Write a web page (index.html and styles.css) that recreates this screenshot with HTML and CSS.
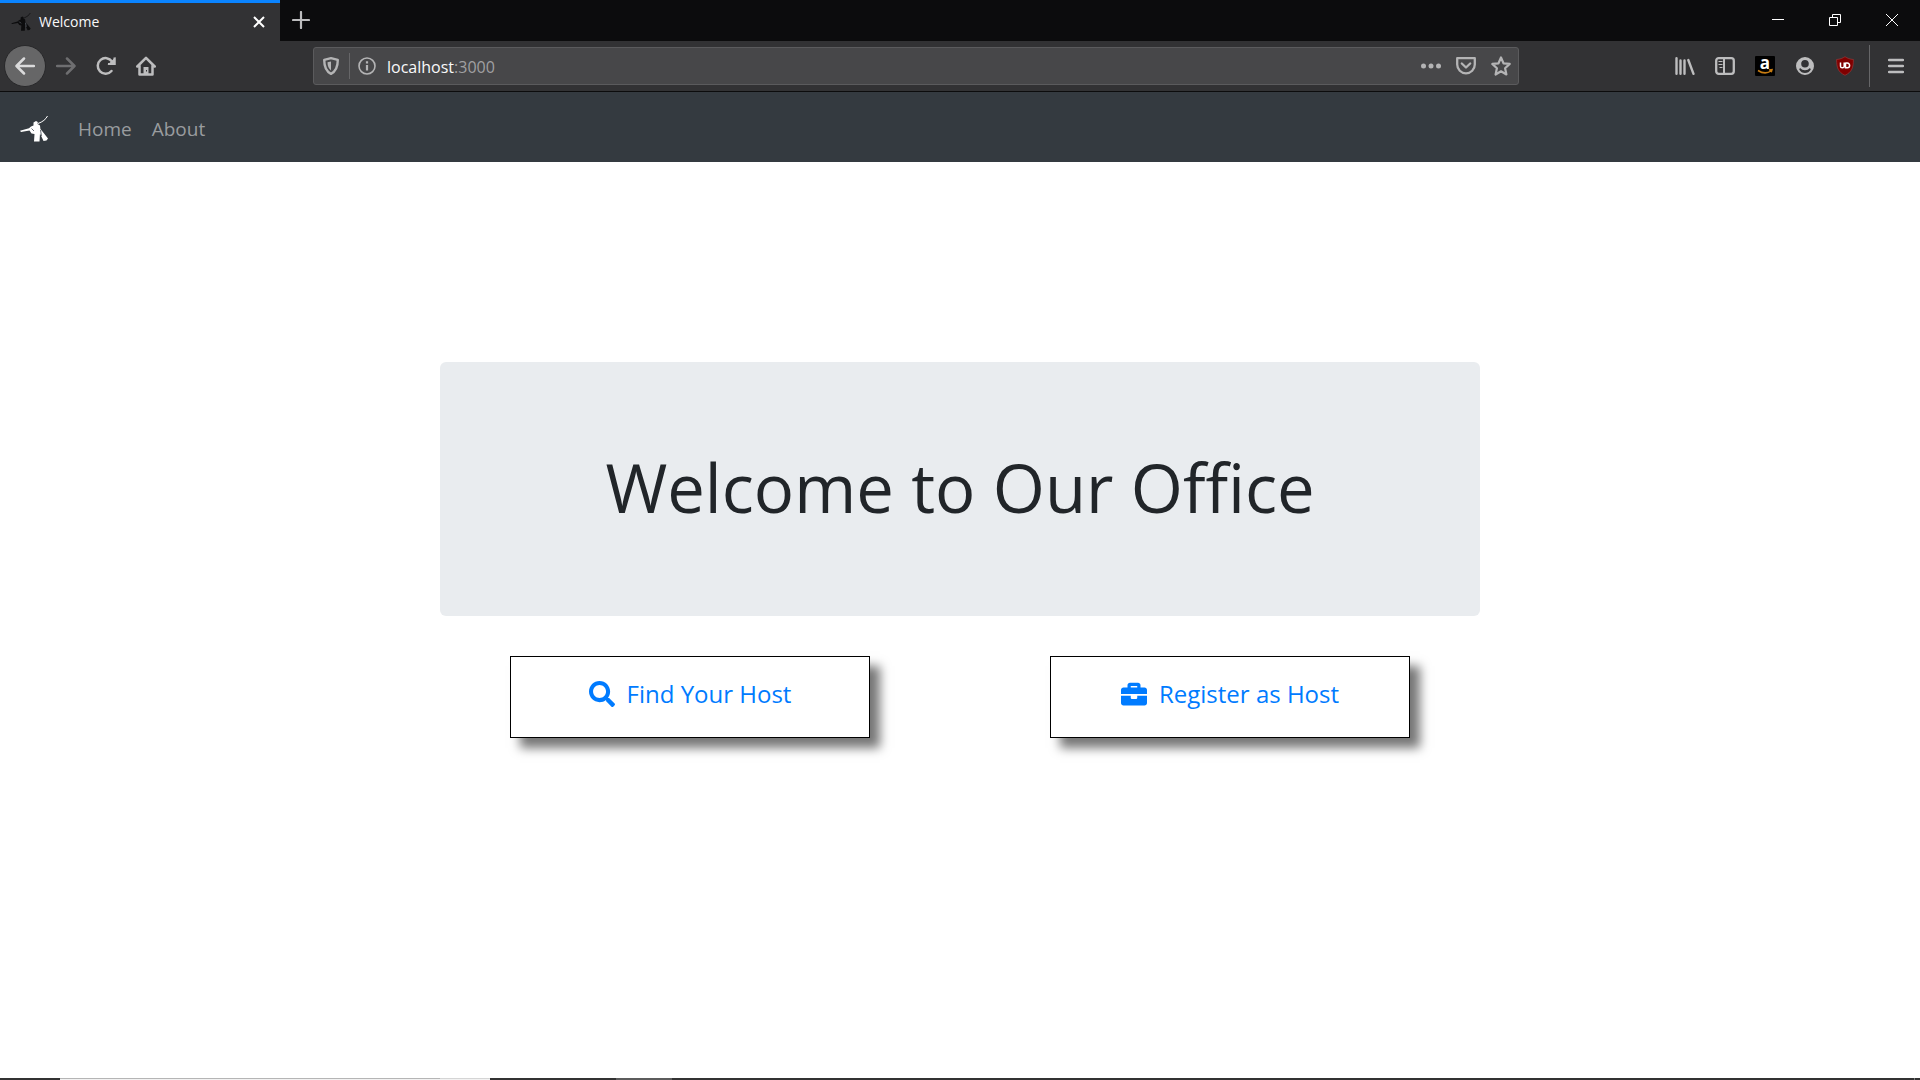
FILE: index.html
```html
<!DOCTYPE html>
<html lang="en">
<head>
<meta charset="utf-8">
<title>Welcome</title>
<link rel="stylesheet" href="styles.css">
</head>
<body>
<svg class="symbols" aria-hidden="true">
  <symbol id="bagpiper" viewBox="0 0 28 26">
    <path d="M0 14.800L9 12.300 11 10.500 13.500 9.500 13.500 6.500 16 5 17.800 6 17.600 8 20 9.500 20.400 13 22.500 15.500 28 22.500 26.500 24.500 23.500 25 20 17.500 19.500 25.500 14 25.500 14.500 18 11.500 17.500 9.500 14.500 1 16Z"/>
    <path d="M18 7.500Q25 5 27.500 0" fill="none" stroke="currentColor" stroke-width="1"/>
    <path d="M11.500 12.500L14 15M20.500 14l1 6" stroke="#6a7078" stroke-width="1"/>
  </symbol>
</svg>
<div class="window">
  <header class="browser">
    <div class="tabs">
      <div class="tab">
        <svg class="favicon" width="20" height="18"><use href="#bagpiper"/></svg>
        <span class="tab-title">Welcome</span>
        <button class="tool tab-close" aria-label="Close tab"><svg width="12" height="12" viewBox="0 0 12 12"><path d="M1 1l10 10M11 1L1 11" stroke-width="2"/></svg></button>
      </div>
      <button class="tool new-tab" aria-label="New tab"><svg width="18" height="18" viewBox="0 0 18 18"><path d="M9 1v16M1 9h16" stroke-width="2.200" stroke-linecap="round"/></svg></button>
      <div class="controls">
        <button class="tool" aria-label="Minimize"><svg width="12" height="12" viewBox="0 0 12 12"><path d="M0 5.500h12"/></svg></button>
        <button class="tool" aria-label="Restore"><svg width="12" height="12" viewBox="0 0 12 12"><path d="M.5 3.500h8v8h-8zM3.500 3.500v-3h8v8h-3"/></svg></button>
        <button class="tool" aria-label="Close"><svg width="14" height="14" viewBox="0 0 14 14"><path d="M1 1l12 12M13 1L1 13"/></svg></button>
      </div>
    </div>
    <div class="toolbar">
      <div class="nav-buttons">
        <button class="tool back" aria-label="Back"><svg width="20" height="18" viewBox="0 0 20 18"><path d="M19 9H2M9 1.500L1.500 9 9 16.500" stroke-width="2.500" stroke-linecap="round" stroke-linejoin="round"/></svg></button>
        <button class="tool forward" aria-label="Forward"><svg width="20" height="18" viewBox="0 0 20 18"><path d="M1 9h17M11 1.500L18.500 9 11 16.500" stroke-width="2.500" stroke-linecap="round" stroke-linejoin="round"/></svg></button>
        <button class="tool" aria-label="Reload"><svg width="20" height="20" viewBox="0 0 20 20"><path d="M15.500 15A7.800 7.800 0 1 1 16 5.500" stroke-width="2.500" stroke-linecap="round"/><path d="M19.500 1v8H11.500z" fill="currentColor" stroke="none"/><path d="M18.500 1.500v6.500h-6.500" stroke-width="2"/></svg></button>
        <button class="tool" aria-label="Home"><svg width="20" height="20" viewBox="0 0 20 20"><path d="M1.300 10.500L10 1.800l8.700 8.700M3.500 9.500v9h13v-9" stroke-width="2.500" stroke-linecap="round" stroke-linejoin="round"/><path d="M7.500 18v-7h5v7z" fill="currentColor" stroke="none"/><path d="M10.500 14v1.500" stroke="#323234"/></svg></button>
      </div>
      <div class="address">
        <button class="tool shield" aria-label="Tracking protection"><svg width="16" height="18" viewBox="0 0 16 18"><path d="M8 1.200l6.800 1.600c0 7-1.500 11.500-6.800 14C2.700 14.300 1.200 9.800 1.200 2.800z" stroke-width="2.400" stroke-linejoin="round"/><path d="M8 4.500v9C5.500 11.500 4.500 9 4.500 5.300z" fill="currentColor" stroke="none"/></svg></button>
        <span class="divider"></span>
        <button class="tool info" aria-label="Site information"><svg width="18" height="18" viewBox="0 0 18 18"><circle cx="9" cy="9" r="8" stroke-width="1.600"/><path d="M9 8v5.500M9 4.300v2.200" stroke-width="2.200"/></svg></button>
        <p class="url"><b>localhost</b>:3000</p>
        <button class="tool" aria-label="Page actions"><svg width="20" height="6" viewBox="0 0 20 6"><g fill="currentColor" stroke="none"><circle cx="2.500" cy="3" r="2.500"/><circle cx="10" cy="3" r="2.500"/><circle cx="17.500" cy="3" r="2.500"/></g></svg></button>
        <button class="tool" aria-label="Save to Pocket"><svg width="20" height="18" viewBox="0 0 20 18"><path d="M1.200 1.200h17.600v6.300a8.800 8.800 0 0 1-17.600 0z" stroke-width="2.300" stroke-linejoin="round"/><path d="M5.800 6.500L10 10.500l4.200-4" stroke-width="2.300" stroke-linecap="round" stroke-linejoin="round"/></svg></button>
        <button class="tool" aria-label="Bookmark"><svg width="20" height="20" viewBox="0 0 20 20"><path d="M10 1.500l2.500 5.800 6.200.6-4.600 4.300 1.300 6.300L10 15.300l-5.400 3.200 1.300-6.300L1.300 7.900l6.200-.6z" stroke-width="2.200" stroke-linejoin="round"/></svg></button>
      </div>
      <div class="extensions">
        <button class="tool" aria-label="Library"><svg width="20" height="18" viewBox="0 0 20 18"><path d="M1.500 1.200v15.600M5.500 3.500v13.300M9.500 3.500v13.300M13.300 3L18.500 16.800" stroke-width="2.400" stroke-linecap="round"/></svg></button>
        <button class="tool" aria-label="Sidebars"><svg width="20" height="18" viewBox="0 0 20 18"><rect x="1.200" y="1.200" width="17.600" height="15.600" rx="2.500" stroke-width="2.300"/><path d="M9 1v16" stroke-width="2"/><path d="M3.500 4.500h4M3.500 7.500h4M4.500 10.500h3" stroke-width="1.200"/></svg></button>
        <button class="tool" aria-label="Amazon"><svg class="amazon-icon" width="20" height="20" viewBox="0 0 20 20"><rect width="20" height="20" rx="1" fill="#000" stroke="none"/><text x="10" y="13" text-anchor="middle" class="amazon">a</text><path d="M3 14.500q7 4.500 13 .5M14 14l3-.3-.8 2.600" stroke="#c77c12" stroke-width="1.500"/></svg></button>
        <button class="tool" aria-label="Account"><svg width="18" height="18" viewBox="0 0 18 18"><path fill="currentColor" stroke="none" fill-rule="evenodd" d="M9 0a9 9 0 1 0 0 18A9 9 0 0 0 9 0zM9 3a3.800 3.800 0 0 1 0 7.600A3.800 3.800 0 0 1 9 3zM4 11q2 2.200 5 2.200T14 11l.8 1.500Q12.800 16 9 16t-5.800-3.500z"/></svg></button>
        <button class="tool" aria-label="uBlock Origin"><svg width="20" height="20" viewBox="0 0 20 20"><path d="M10 .7c2.500 1.600 5 2.500 8.400 2.800 0 8-1.400 12.500-8.400 15.800C3 16 1.600 11.500 1.600 3.500 5 3.200 7.500 2.300 10 .7z" fill="#800000" stroke="#a33a3a" stroke-width=".6"/><path d="M5.500 6.500v3.700q0 1.600 1.800 1.600t1.900-1.600V6.500M10.500 6.500v5.200h1.800a2.300 2.300 0 0 0 0-4.600h-1.800" stroke="#fff" stroke-width="1.500"/></svg></button>
        <span class="divider tall"></span>
        <button class="tool" aria-label="Menu"><svg width="16" height="16" viewBox="0 0 16 16"><path d="M1 2h14M1 8h14M1 14h14" stroke-width="2.300" stroke-linecap="round"/></svg></button>
      </div>
    </div>
  </header>
  <nav class="navbar">
    <a href="#" class="brand" aria-label="Start"><svg width="28" height="26"><use href="#bagpiper"/></svg></a>
    <a href="#" class="nav-link">Home</a>
    <a href="#" class="nav-link">About</a>
  </nav>
  <main class="content">
    <section class="jumbotron"><h1>Welcome to Our Office</h1></section>
    <div class="choices">
      <a href="#" class="choice"><svg width="26" height="26" viewBox="0 0 512 512"><path d="M505 442.700L405.300 343c-4.500-4.500-10.600-7-17-7H372c27.600-35.300 44-79.700 44-128C416 93.100 322.900 0 208 0S0 93.100 0 208s93.100 208 208 208c48.300 0 92.700-16.400 128-44v16.300c0 6.400 2.500 12.500 7 17l99.700 99.700c9.400 9.400 24.600 9.400 33.900 0l28.300-28.300c9.400-9.400 9.400-24.600.1-34zM208 336c-70.700 0-128-57.200-128-128 0-70.700 57.200-128 128-128 70.700 0 128 57.200 128 128 0 70.700-57.200 128-128 128z"/></svg>Find Your Host</a>
      <a href="#" class="choice"><svg width="26" height="26" viewBox="0 0 512 512"><path d="M320 336c0 8.840-7.160 16-16 16h-96c-8.840 0-16-7.160-16-16v-48H0v144c0 25.600 22.400 48 48 48h416c25.600 0 48-22.400 48-48V288H320v48zm144-208h-80V80c0-25.600-22.400-48-48-48H176c-25.600 0-48 22.400-48 48v48H48c-25.600 0-48 22.400-48 48v80h512v-80c0-25.600-22.400-48-48-48zm-144 0H192V96h128v32z"/></svg>Register as Host</a>
    </div>
  </main>
  <footer class="taskbar"><span class="start"></span><span class="search"></span><span class="search-end"></span><span class="pinned"></span><span class="active-app"></span><span class="show-desktop"></span></footer>
</div>
</body>
</html>
```

FILE: styles.css
```css
* { box-sizing: border-box; }
body { margin: 0; background: #fff; color: #212529; font-family: "Segoe UI", "Open Sans", "Noto Sans", sans-serif; }
.symbols { position: absolute; width: 0; height: 0; }
.window { min-height: 100vh; display: flex; flex-direction: column; }

.tool { display: flex; align-items: center; justify-content: center; flex: none; margin: 0; padding: 0; border: 0; background: none; color: #bdbdbe; }
.tool svg { display: block; fill: none; stroke: currentColor; }

.browser { background: #323234; border-bottom: 1px solid #0c0c0d; }
.tabs { display: flex; height: 41px; background: #0c0c0d; }
.tab { display: flex; align-items: center; width: 280px; padding: 0 12px 0 11px; border-top: 3px solid #0a84ff; background: #323234; color: #f9f9fa; }
.favicon { fill: #0c0c0d; color: #0c0c0d; }
.tab-title { flex: 1; padding-left: 8px; font-size: 14px; line-height: 20px; }
.tab-close { width: 18px; height: 24px; color: #fff; }
.new-tab { width: 42px; height: 40px; }
.controls { display: flex; height: 40px; margin-left: auto; }
.controls .tool { width: 57px; color: #fff; }

.toolbar { display: flex; align-items: center; height: 50px; padding: 0 4px; }
.nav-buttons { display: flex; align-items: center; width: 309px; }
.nav-buttons .tool { width: 40px; height: 40px; }
.nav-buttons .back { width: 42px; height: 42px; border: 1px solid #28282a; border-radius: 50%; background: #666667; color: #dadadb; }
.nav-buttons .forward { color: #6e6e70; }
.address { display: flex; align-items: center; flex: 1; height: 38px; padding: 0 0 0 3px; border: 1px solid #5b5b5d; border-radius: 3px; background: #474749; }
.address .tool { width: 35px; height: 34px; color: #b4b4b5; }
.address .shield { width: 28px; }
.divider { width: 1px; height: 26px; margin-left: 4px; background: #666668; }
.address .info { width: 34px; }
.url { flex: 1; margin: 0; padding: 2px 0 0 3px; font-size: 16px; line-height: 24px; color: #a0a0a2; }
.url b { font-weight: 400; color: #f9f9fa; }
.extensions { display: flex; align-items: center; margin-left: 146px; }
.extensions .tool { width: 40px; height: 40px; }
.extensions .tall { height: 42px; margin: 0 6px 0 4px; }
.tool .amazon-icon { overflow: visible; }
.amazon { font: bold 17px "Open Sans", sans-serif; fill: #fff; stroke: none; }

.navbar { display: flex; align-items: center; height: 70px; padding: 4px 20px 0; background: #343a40; }
.brand { display: flex; margin-right: 20px; color: #fff; fill: #fff; }
.nav-link { padding: 8px 10px; font-size: 19px; line-height: 30px; color: #999c9f; text-decoration: none; }

.content { flex: 1; width: 100%; max-width: 1080px; margin: 0 auto; padding: 200px 20px 40px; }
.jumbotron { padding: 78px 40px 82px; border-radius: 6px; background: #e9ecef; text-align: center; }
.jumbotron h1 { margin: 0; font-size: 67px; font-weight: 400; line-height: 94px; }
.choices { display: flex; justify-content: space-around; margin: 40px -20px 0; }
.choice { display: flex; justify-content: center; align-items: flex-start; gap: 12px; width: 360px; height: 82px; padding: 20px; border: 1px solid #000; background: #fff; box-shadow: 10px 10px 10px #777; color: #007bff; font-size: 24px; line-height: 34px; text-decoration: none; }
.choice svg { margin-top: 4px; fill: currentColor; }

.taskbar { display: flex; height: 2px; background: #333; }
.start { width: 60px; }
.search { width: 380px; border-top: 1px solid #b5b5b5; background: #f2f2f2; }
.search-end { width: 50px; border-top: 1px solid #d5d5d5; background: #f2f2f2; }
.pinned { width: 126px; }
.active-app { width: 56px; background: #5c5c5c; }
.show-desktop { width: 6px; margin-left: auto; border-left: 1px solid #777; }
```
